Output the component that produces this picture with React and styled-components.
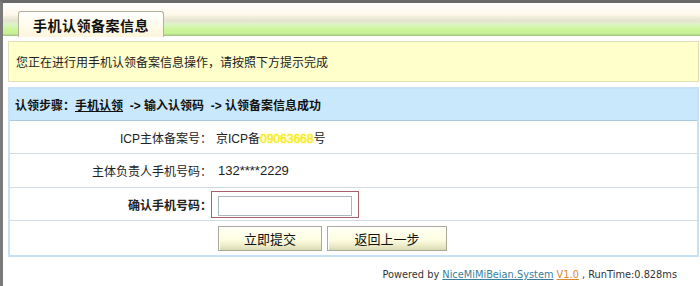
import React from "react";
import styled, { createGlobalStyle } from "styled-components";

const GlobalStyle = createGlobalStyle`
  html, body {
    margin: 0;
    padding: 0;
    background: #fff;
  }
  body {
    font-family: "Liberation Sans", "Noto Sans CJK SC", sans-serif;
    font-size: 12px;
    color: #222;
  }
`;

const Frame = styled.div`
  box-sizing: border-box;
  width: 700px;
  height: 286px;
  border-top: 3px solid #6a6a6a;
  border-left: 3px solid #7a7a7a;
  overflow: hidden;
`;

const TabBar = styled.div`
  display: flex;
  align-items: flex-end;
  height: 33px;
  padding-left: 15px;
  background: linear-gradient(
    to bottom,
    #ffffff 0px,
    #fff8ea 12px,
    #f1eedc 14px,
    #e4e2cf 18px,
    #def4c6 21px,
    #cdf59c 26px,
    #c6ee94 31px,
    #a9c985 32px,
    #a9c985 33px
  );
`;

const Tab = styled.div`
  box-sizing: border-box;
  height: 26px;
  width: 146px;
  margin-bottom: -1px;
  border: 1px solid #b4b19f;
  border-bottom: none;
  border-radius: 3px 3px 0 0;
  background: linear-gradient(to bottom, #ffffff, #fffbe9 60%, #fcf5dc);
  display: flex;
  align-items: center;
  justify-content: center;
  font-size: 14px;
  font-weight: bold;
  color: #111;
  letter-spacing: 0.5px;
`;

const Content = styled.div`
  padding: 5px 1px 0 5px;
`;

const Notice = styled.div`
  box-sizing: border-box;
  height: 41px;
  padding-left: 7px;
  display: flex;
  align-items: center;
  background: #ffffcc;
  border: 1px solid #e2dfb4;
  font-size: 12px;
  color: #222;
`;

const Table = styled.div`
  margin-top: 5px;
  border: 2px solid #c6e2f4;
  background: #fff;
`;

const StepHead = styled.div`
  height: 31px;
  display: flex;
  align-items: center;
  padding-left: 5px;
  background: #c9e8fb;
  border-bottom: 1px solid #a9cbe1;
  font-size: 12px;
  font-weight: bold;
  color: #111;
  white-space: pre;
`;

const Current = styled.span`
  text-decoration: underline;
`;

const Row = styled.div`
  display: grid;
  grid-template-columns: 200px 1fr;
  height: ${(p) => p.h || 32}px;
  border-bottom: ${(p) => (p.last ? "none" : "1px solid #d2dbe2")};
`;

const Label = styled.div`
  display: flex;
  align-items: center;
  justify-content: flex-end;
  margin-right: -2px;
  font-size: 12px;
  font-weight: ${(p) => (p.strong ? "bold" : "normal")};
  color: #222;
`;

const Value = styled.div`
  display: flex;
  align-items: center;
  gap: 5px;
  padding-left: ${(p) => p.pad ?? 7}px;
  font-size: ${(p) => p.size || 12}px;
  color: #222;
`;

const Masked = styled.span`
  color: #f3ea20;
  text-shadow: 0 0 1px #fff36a, 0 0 2px #f6ee40;
`;

const InputFrame = styled.span`
  display: inline-flex;
  padding: 4px 6px 1px 6px;
  border: 1px solid #a9606c;
`;

const Input = styled.input`
  box-sizing: border-box;
  width: 134px;
  height: 20px;
  border: 1px solid #a8b8c0;
  outline: none;
  background: #fff;
`;

const Button = styled.button`
  box-sizing: border-box;
  height: 25px;
  width: ${(p) => p.w}px;
  border: 1px solid #aaa99a;
  box-shadow: inset 1px 1px 0 #fff;
  background: linear-gradient(
    to bottom,
    #fffff4 0%,
    #fdfde2 55%,
    #eeeecc 78%,
    #dadab4 100%
  );
  font-family: "Liberation Sans", "Noto Sans CJK SC", sans-serif;
  font-size: 13px;
  color: #111;
  padding: 0;
`;

const Footer = styled.div`
  margin-top: 11px;
  padding-right: 22px;
  text-align: right;
  line-height: 14px;
  font-family: "DejaVu Sans", sans-serif;
  font-size: 9.8px;
  color: #333;
`;

const FootLink = styled.span`
  text-decoration: underline;
  color: ${(p) => p.color};
`;

const App = () => (
  <Frame>
    <GlobalStyle />
    <TabBar>
      <Tab>手机认领备案信息</Tab>
    </TabBar>
    <Content>
      <Notice>您正在进行用手机认领备案信息操作，请按照下方提示完成</Notice>
      <Table>
        <StepHead>
          认领步骤：<Current>手机认领</Current>  -&gt; 输入认领码  -&gt; 认领备案信息成功
        </StepHead>
        <Row>
          <Label>ICP主体备案号：</Label>
          <Value pad={6}>
            <span>
              京ICP备<Masked>09063668</Masked>号
            </span>
          </Value>
        </Row>
        <Row h={33}>
          <Label>主体负责人手机号码：</Label>
          <Value size={13} pad={8}>
            132****2229
          </Value>
        </Row>
        <Row>
          <Label strong>确认手机号码：</Label>
          <Value pad={1}>
            <InputFrame>
              <Input type="text" />
            </InputFrame>
          </Value>
        </Row>
        <Row h={34} last>
          <Label />
          <Value pad={8}>
            <Button w={104}>立即提交</Button>
            <Button w={120}>返回上一步</Button>
          </Value>
        </Row>
      </Table>
      <Footer>
        Powered by <FootLink color="#3b7f9c">NiceMiMiBeian.System</FootLink>{" "}
        <FootLink color="#e08930">V1.0</FootLink> , RunTime:0.828ms
      </Footer>
    </Content>
  </Frame>
);

export default App;
